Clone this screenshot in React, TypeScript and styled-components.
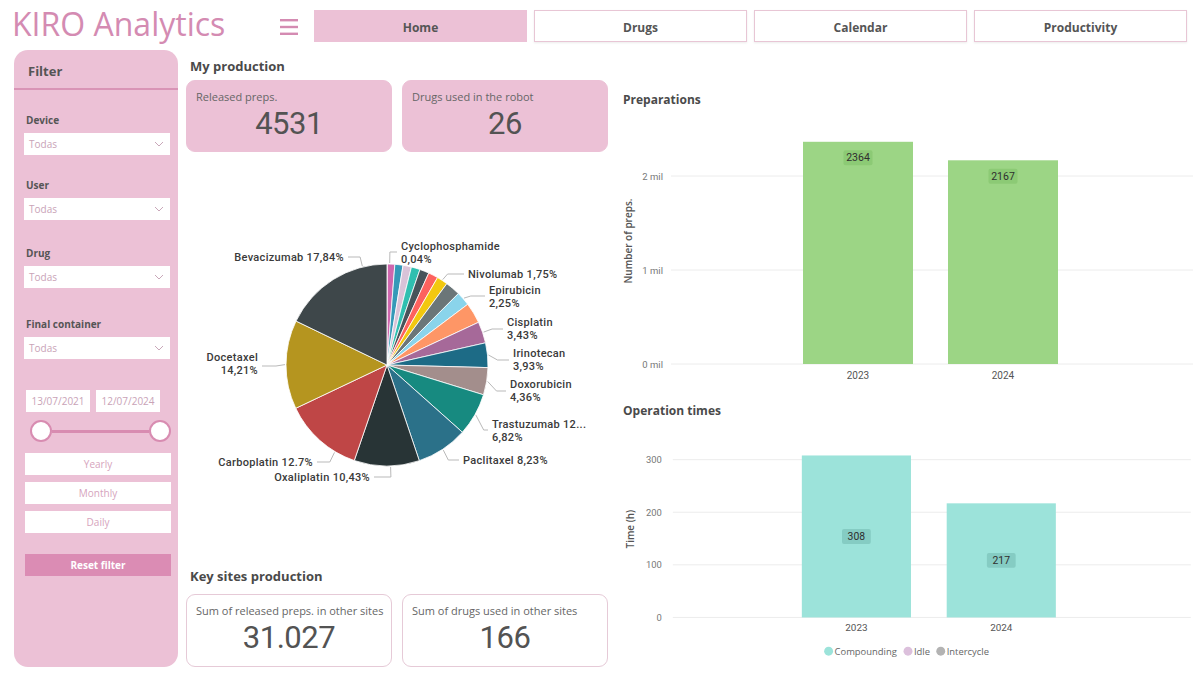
import React from 'react';
import styled, { createGlobalStyle } from 'styled-components';

const PINK = '#ecc1d6';
const PINK_DARK = '#db8cb4';
const PINK_LINE = '#d994b6';
const TITLE_PINK = '#d48bb2';
const TEXT = '#4a4a4a';
const MUTED = '#c9a3b7';

const GlobalStyle = createGlobalStyle`
  html, body { margin: 0; padding: 0; background: #fff; }
  body { font-family: "Open Sans", "Noto Sans", Arial, sans-serif; color: ${TEXT}; }
  * { box-sizing: border-box; }
`;

const Page = styled.div`
  width: 1200px;
  height: 674px;
  overflow: hidden;
  display: flex;
  flex-direction: column;
  background: #fff;
`;

/* ---------- header ---------- */
const Header = styled.header`
  height: 50px;
  display: flex;
  align-items: flex-start;
  padding-left: 12px;
`;

const Brand = styled.h1`
  margin: 2px 0 0;
  width: 268px;
  font-size: 32px;
  font-weight: 400;
  line-height: 43px;
  color: ${TITLE_PINK};
  white-space: nowrap;
`;

const Burger = styled.svg`
  margin-top: 18px;
  width: 18px;
  height: 18px;
  flex-shrink: 0;
`;

const Tabs = styled.nav`
  display: flex;
  gap: 7px;
  margin: 10px 0 0 16px;
`;

const Tab = styled.div<{ $active?: boolean }>`
  width: 213px;
  height: 32px;
  padding-top: 2px;
  display: flex;
  align-items: center;
  justify-content: center;
  font-size: 12px;
  font-weight: 700;
  color: #555;
  background: ${(p) => (p.$active ? PINK : '#fff')};
  border: 1px solid ${(p) => (p.$active ? PINK : '#e8c6d5')};
  box-shadow: ${(p) => (p.$active ? 'none' : '0 1px 2px rgba(0,0,0,0.08)')};
`;

/* ---------- body ---------- */
const Body = styled.main`
  display: flex;
  height: 624px;
  padding-left: 14px;
`;

/* ---------- sidebar ---------- */
const Sidebar = styled.aside`
  width: 164px;
  height: 617px;
  flex-shrink: 0;
  background: ${PINK};
  border-radius: 14px;
  display: flex;
  flex-direction: column;
  overflow: hidden;
`;

const SidebarHead = styled.div`
  height: 40px;
  padding: 13px 0 0 14px;
  font-size: 13px;
  font-weight: 700;
  line-height: 16px;
  color: #555;
  border-bottom: 2px solid ${PINK_LINE};
`;

const SidebarContent = styled.div`
  padding: 23px 8px 0 10px;
  display: flex;
  flex-direction: column;
`;

const FieldGroup = styled.div<{ $top: number }>`
  display: flex;
  flex-direction: column;
  margin-top: ${(p) => p.$top}px;
`;

const FieldLabel = styled.label`
  font-size: 10px;
  font-weight: 700;
  line-height: 14px;
  padding-left: 2px;
  margin-bottom: 6px;
  color: #555;
`;

const Select = styled.div`
  height: 22px;
  background: #fff;
  display: flex;
  align-items: center;
  justify-content: space-between;
  padding: 0 6px 0 5px;
  font-size: 10px;
  color: ${MUTED};
`;

const DateRow = styled.div`
  margin-top: 31px;
  padding-left: 2px;
  display: flex;
  gap: 6px;
`;

const DateBox = styled.div`
  width: 64px;
  height: 22px;
  background: #fff;
  display: flex;
  align-items: center;
  justify-content: center;
  font-size: 10px;
  color: ${MUTED};
`;

const SliderRow = styled.div`
  margin: 8px -1px 0 6px;
  height: 22px;
  display: flex;
  align-items: center;
`;

const Knob = styled.div`
  width: 22px;
  height: 22px;
  border-radius: 50%;
  background: #fff;
  border: 2px solid #d88cb1;
  flex-shrink: 0;
`;

const Track = styled.div`
  flex: 1;
  height: 3px;
  background: #d88cb1;
`;

const PeriodList = styled.div`
  margin: 11px 0 0 1px;
  width: 146px;
  display: flex;
  flex-direction: column;
  gap: 7px;
`;

const PeriodButton = styled.div`
  height: 22px;
  background: #fff;
  display: flex;
  align-items: center;
  justify-content: center;
  font-size: 10px;
  color: #d6a4bd;
`;

const ResetButton = styled.div`
  margin: 21px 0 0 1px;
  width: 146px;
  height: 22px;
  background: ${PINK_DARK};
  display: flex;
  align-items: center;
  justify-content: center;
  font-size: 10px;
  font-weight: 700;
  color: #fff;
`;

/* ---------- middle column ---------- */
const Middle = styled.section`
  width: 425px;
  margin-left: 7px;
  padding-top: 8px;
  display: flex;
  flex-direction: column;
  flex-shrink: 0;
`;

const SectionTitle = styled.h2<{ $gap: number }>`
  margin: 0 0 ${(p) => p.$gap}px;
  padding-left: 5px;
  font-size: 13px;
  font-weight: 700;
  line-height: 16px;
  color: ${TEXT};
`;

const KpiRow = styled.div`
  display: flex;
  gap: 10px;
  padding-left: 1px;
`;

const Kpi = styled.div<{ $outline?: boolean; $h: number }>`
  width: 206px;
  height: ${(p) => p.$h}px;
  border-radius: 9px;
  background: ${(p) => (p.$outline ? '#fff' : PINK)};
  border: 1px solid ${(p) => (p.$outline ? '#e6cad7' : PINK)};
  padding: 9px 9px 0;
  display: flex;
  flex-direction: column;
`;

const KpiLabel = styled.div`
  font-size: 11px;
  line-height: 14px;
  color: #666;
  white-space: nowrap;
`;

const KpiValue = styled.div`
  margin-top: 4px;
  font-family: Roboto, "Liberation Sans", sans-serif;
  font-size: 31px;
  line-height: 32px;
  letter-spacing: -0.5px;
  text-align: center;
  color: #535353;
`;

const PieArea = styled.div`
  height: 416px;
`;

/* ---------- right column ---------- */
const Right = styled.section`
  width: 585px;
  margin-left: 5px;
  display: flex;
  flex-direction: column;
`;

const ChartBlock = styled.div<{ $h: number; $pt: number }>`
  height: ${(p) => p.$h}px;
  padding-top: ${(p) => p.$pt}px;
  display: flex;
  flex-direction: column;
`;

const ChartTitle = styled.h3`
  margin: 0;
  padding-left: 8px;
  font-size: 12px;
  font-weight: 700;
  line-height: 14px;
  color: ${TEXT};
`;

/* ---------- svg text ---------- */
const PieText = styled.text`
  font-family: Roboto, "DejaVu Sans", sans-serif;
  font-size: 11px;
  font-weight: 500;
  letter-spacing: 0.3px;
  fill: #3a3a3a;
`;

const AxisText = styled.text`
  font-family: Roboto, "DejaVu Sans", sans-serif;
  font-size: 9.5px;
  fill: #777;
`;

const YearText = styled.text`
  font-family: Roboto, "DejaVu Sans", sans-serif;
  font-size: 10px;
  fill: #555;
`;

const AxisTitle = styled.text`
  font-family: "Open Sans", sans-serif;
  font-size: 10px;
  font-weight: 600;
  fill: #555;
`;

const DataText = styled.text`
  font-family: Roboto, "DejaVu Sans", sans-serif;
  font-size: 10.5px;
  fill: #2f2f2f;
`;

const LegendText = styled.text`
  font-family: "Open Sans", sans-serif;
  font-size: 9.5px;
  fill: #666;
`;

/* ---------- icons ---------- */
const Chevron = () => (
  <svg width="10" height="6" viewBox="0 0 10 6">
    <polyline points="1,1 5,5 9,1" fill="none" stroke="#c9a7b9" strokeWidth="1" />
  </svg>
);

/* ---------- pie ---------- */
type Slice = { p: number; c: string };
const slices: Slice[] = [
  { p: 0.04, c: '#c8bf9f' },
  { p: 1.2, c: '#cf67ae' },
  { p: 1.3, c: '#3599b8' },
  { p: 1.35, c: '#d9c3d8' },
  { p: 1.4, c: '#2fbfb0' },
  { p: 1.5, c: '#48535a' },
  { p: 1.55, c: '#fd625e' },
  { p: 1.75, c: '#f2c80f' },
  { p: 2.4, c: '#6b7678' },
  { p: 2.25, c: '#8ad4eb' },
  { p: 3.31, c: '#fe9666' },
  { p: 3.43, c: '#a66999' },
  { p: 3.93, c: '#1d6b86' },
  { p: 4.36, c: '#a38e8c' },
  { p: 6.82, c: '#178a80' },
  { p: 8.23, c: '#2b7189' },
  { p: 10.43, c: '#283436' },
  { p: 12.7, c: '#bf4646' },
  { p: 14.21, c: '#b5951f' },
  { p: 17.84, c: '#3e474a' },
];

type PieLabel = {
  lines: string[];
  x: number;
  y: number;
  anchor: 'start' | 'end';
  angle: number;
  lineY: number;
};

const pieLabels: PieLabel[] = [
  { lines: ['Bevacizumab 17,84%'], x: 159, y: 105, anchor: 'end', angle: 346, lineY: 105 },
  { lines: ['Cyclophosphamide', '0,04%'], x: 216, y: 94, anchor: 'start', angle: 1.5, lineY: 100 },
  { lines: ['Nivolumab 1,75%'], x: 283, y: 122, anchor: 'start', angle: 33.1, lineY: 122 },
  { lines: ['Epirubicin', '2,25%'], x: 304, y: 138, anchor: 'start', angle: 49, lineY: 144 },
  { lines: ['Cisplatin', '3,43%'], x: 322, y: 170, anchor: 'start', angle: 71.2, lineY: 177 },
  { lines: ['Irinotecan', '3,93%'], x: 328, y: 201, anchor: 'start', angle: 84.4, lineY: 208 },
  { lines: ['Doxorubicin', '4,36%'], x: 325, y: 232, anchor: 'start', angle: 99.3, lineY: 239 },
  { lines: ['Trastuzumab 12...', '6,82%'], x: 307, y: 272, anchor: 'start', angle: 119.4, lineY: 278 },
  { lines: ['Paclitaxel 8,23%'], x: 278, y: 308, anchor: 'start', angle: 146.5, lineY: 308 },
  { lines: ['Oxaliplatin 10,43%'], x: 185, y: 325, anchor: 'end', angle: 178, lineY: 325 },
  { lines: ['Carboplatin 12.7%'], x: 128, y: 310, anchor: 'end', angle: 211, lineY: 310 },
  { lines: ['Docetaxel', '14,21%'], x: 73, y: 205, anchor: 'end', angle: 270.2, lineY: 214 },
];

const CX = 202;
const CY = 213;
const R = 101;

const pt = (deg: number, r: number): [number, number] => {
  const a = (deg * Math.PI) / 180;
  return [CX + r * Math.sin(a), CY - r * Math.cos(a)];
};

const PieChart = () => {
  let acc = 0;
  const paths = slices.map((s, i) => {
    const a0 = (acc / 100) * 360;
    acc += s.p;
    const a1 = (acc / 100) * 360;
    const [x0, y0] = pt(a0, R);
    const [x1, y1] = pt(a1, R);
    const large = a1 - a0 > 180 ? 1 : 0;
    return (
      <path
        key={i}
        d={`M${CX},${CY} L${x0.toFixed(2)},${y0.toFixed(2)} A${R},${R} 0 ${large} 1 ${x1.toFixed(2)},${y1.toFixed(2)} Z`}
        fill={s.c}
        stroke="#fff"
        strokeWidth={0.8}
        strokeLinejoin="round"
      />
    );
  });
  return (
    <svg width="425" height="416" viewBox="0 0 425 416">
      {paths}
      {pieLabels.map((l, i) => {
        const sign = l.anchor === 'start' ? 1 : -1;
        const [px, py] = pt(l.angle, R + 1);
        const [ex] = pt(l.angle, R + 10);
        const endX = l.x - sign * 4;
        return (
          <g key={i}>
            <polyline
              points={`${px.toFixed(1)},${py.toFixed(1)} ${ex.toFixed(1)},${l.lineY} ${endX},${l.lineY}`}
              fill="none"
              stroke="#b9b9b9"
              strokeWidth={1}
            />
            {l.lines.map((t, j) => (
              <PieText key={j} x={l.x} y={l.y + j * 13.5} textAnchor={l.anchor} dominantBaseline="central">
                {t}
              </PieText>
            ))}
          </g>
        );
      })}
    </svg>
  );
};

/* ---------- bar charts ---------- */
type Bar = { year: string; value: number; label: string; x: number };
type BarChartProps = {
  height: number;
  bottom: number;
  pxPerUnit: number;
  ticks: { v: number; t: string }[];
  tickRight: number;
  bars: Bar[];
  color: string;
  labelBg: string;
  labelMode: 'top' | 'middle';
  axisTitle: string;
  axisTitleY: number;
  yearY: number;
  legend?: { c: string; t: string; x: number }[];
  legendY?: number;
};

const BarChart = (p: BarChartProps) => (
  <svg width="585" height={p.height} viewBox={`0 0 585 ${p.height}`}>
    {p.ticks.map((tk) => {
      const y = p.bottom - tk.v * p.pxPerUnit;
      return (
        <g key={tk.t}>
          <line x1={56} x2={578} y1={y} y2={y} stroke="#ececec" strokeWidth={1} />
          <AxisText x={p.tickRight} y={y} textAnchor="end" dominantBaseline="central">
            {tk.t}
          </AxisText>
        </g>
      );
    })}
    <AxisTitle
      x={13}
      y={p.axisTitleY}
      textAnchor="middle"
      dominantBaseline="central"
      transform={`rotate(-90 13 ${p.axisTitleY})`}
    >
      {p.axisTitle}
    </AxisTitle>
    {p.bars.map((b) => {
      const top = p.bottom - b.value * p.pxPerUnit;
      const cx = b.x + 55;
      const ly = p.labelMode === 'top' ? top + 16 : (top + p.bottom) / 2;
      return (
        <g key={b.year}>
          <rect x={b.x} y={top} width={110} height={p.bottom - top} fill={p.color} />
          <rect x={cx - 14.5} y={ly - 7.5} width={29} height={15} rx={2} fill={p.labelBg} />
          <DataText x={cx} y={ly} textAnchor="middle" dominantBaseline="central">
            {b.label}
          </DataText>
          <YearText x={cx} y={p.yearY} textAnchor="middle" dominantBaseline="central">
            {b.year}
          </YearText>
        </g>
      );
    })}
    {p.legend &&
      p.legend.map((l) => (
        <g key={l.t}>
          <circle cx={l.x} cy={p.legendY} r={4.5} fill={l.c} />
          <LegendText x={l.x + 6} y={p.legendY} dominantBaseline="central">
            {l.t}
          </LegendText>
        </g>
      ))}
  </svg>
);

const tabs = ['Home', 'Drugs', 'Calendar', 'Productivity'];
const filters = [
  { name: 'Device', top: 0 },
  { name: 'User', top: 23 },
  { name: 'Drug', top: 26 },
  { name: 'Final container', top: 29 },
];

export default function App() {
  return (
    <Page>
      <GlobalStyle />
      <Header>
        <Brand>KIRO Analytics</Brand>
        <Burger viewBox="0 0 18 18">
          <rect x="0" y="1" width="18" height="2.4" fill={TITLE_PINK} />
          <rect x="0" y="7.8" width="18" height="2.4" fill={TITLE_PINK} />
          <rect x="0" y="14.6" width="18" height="2.4" fill={TITLE_PINK} />
        </Burger>
        <Tabs>
          {tabs.map((t) => (
            <Tab key={t} $active={t === 'Home'}>
              {t}
            </Tab>
          ))}
        </Tabs>
      </Header>
      <Body>
        <Sidebar>
          <SidebarHead>Filter</SidebarHead>
          <SidebarContent>
            {filters.map((f) => (
              <FieldGroup key={f.name} $top={f.top}>
                <FieldLabel>{f.name}</FieldLabel>
                <Select>
                  <span>Todas</span>
                  <Chevron />
                </Select>
              </FieldGroup>
            ))}
            <DateRow>
              <DateBox>13/07/2021</DateBox>
              <DateBox>12/07/2024</DateBox>
            </DateRow>
            <SliderRow>
              <Knob />
              <Track />
              <Knob />
            </SliderRow>
            <PeriodList>
              <PeriodButton>Yearly</PeriodButton>
              <PeriodButton>Monthly</PeriodButton>
              <PeriodButton>Daily</PeriodButton>
            </PeriodList>
            <ResetButton>Reset filter</ResetButton>
          </SidebarContent>
        </Sidebar>

        <Middle>
          <SectionTitle $gap={6}>My production</SectionTitle>
          <KpiRow>
            <Kpi $h={72}>
              <KpiLabel>Released preps.</KpiLabel>
              <KpiValue>4531</KpiValue>
            </Kpi>
            <Kpi $h={72}>
              <KpiLabel>Drugs used in the robot</KpiLabel>
              <KpiValue>26</KpiValue>
            </Kpi>
          </KpiRow>
          <PieArea>
            <PieChart />
          </PieArea>
          <SectionTitle $gap={10}>Key sites production</SectionTitle>
          <KpiRow>
            <Kpi $outline $h={73}>
              <KpiLabel>Sum of released preps. in other sites</KpiLabel>
              <KpiValue>31.027</KpiValue>
            </Kpi>
            <Kpi $outline $h={73}>
              <KpiLabel>Sum of drugs used in other sites</KpiLabel>
              <KpiValue>166</KpiValue>
            </Kpi>
          </KpiRow>
        </Middle>

        <Right>
          <ChartBlock $h={345} $pt={43}>
            <ChartTitle>Preparations</ChartTitle>
            <BarChart
              height={280}
              bottom={257}
              pxPerUnit={0.094}
              ticks={[
                { v: 0, t: '0 mil' },
                { v: 1000, t: '1 mil' },
                { v: 2000, t: '2 mil' },
              ]}
              tickRight={48}
              bars={[
                { year: '2023', value: 2364, label: '2364', x: 188 },
                { year: '2024', value: 2167, label: '2167', x: 333 },
              ]}
              color="#9cd585"
              labelBg="#8cca75"
              labelMode="top"
              axisTitle="Number of preps."
              axisTitleY={134}
              yearY={268}
            />
          </ChartBlock>
          <ChartBlock $h={279} $pt={9}>
            <ChartTitle>Operation times</ChartTitle>
            <BarChart
              height={258}
              bottom={201}
              pxPerUnit={0.53}
              ticks={[
                { v: 0, t: '0' },
                { v: 100, t: '100' },
                { v: 200, t: '200' },
                { v: 300, t: '300' },
              ]}
              tickRight={45}
              bars={[
                { year: '2023', value: 308, label: '308', x: 186 },
                { year: '2024', value: 217, label: '217', x: 332 },
              ]}
              color="#9ce3da"
              labelBg="#85ccc3"
              labelMode="middle"
              axisTitle="Time (h)"
              axisTitleY={112}
              yearY={211}
              legend={[
                { c: '#9ce3da', t: 'Compounding', x: 213 },
                { c: '#dcc0dc', t: 'Idle', x: 293 },
                { c: '#b3b3b3', t: 'Intercycle', x: 326 },
              ]}
              legendY={235}
            />
          </ChartBlock>
        </Right>
      </Body>
    </Page>
  );
}
